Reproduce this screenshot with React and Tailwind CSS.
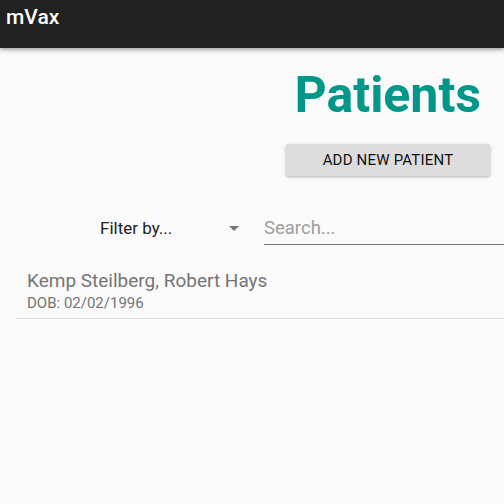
function Header() {
  return (
    <div className="h-12 bg-[#212121] shadow-[0_2px_4px_rgba(0,0,0,0.35)] relative z-10 px-[6px] pt-[5px]">
      <span className="text-white text-[21px] font-medium leading-6">mVax</span>
    </div>
  );
}

function PatientRow({ name, dob }) {
  return (
    <div className="ml-4 border-b border-[#e0e0e0] pl-[11px] pt-[3px] pb-[5px]">
      <div className="text-[19px] leading-6 text-[#757575]">{name}</div>
      <div className="text-[15px] leading-5 text-[#757575]">DOB: {dob}</div>
    </div>
  );
}

export default function App() {
  return (
    <div className="w-[504px] h-[504px] overflow-hidden bg-[#fafafa]" style={{ fontFamily: 'Roboto, sans-serif' }}>
      <Header />
      <div className="flex flex-col items-end pr-[14px] pt-[18px]">
        <h1 className="text-[50px] leading-[58px] font-bold text-[#009688] pr-[9px]">Patients</h1>
        <button className="mt-[20px] w-[204px] h-[32px] bg-[#dcdcdc] rounded-[2px] shadow-[0_1px_3px_rgba(0,0,0,0.3)] text-[15px] text-[#111] tracking-[0.2px]">
          ADD NEW PATIENT
        </button>
      </div>
      <div className="flex items-end mt-[31px] h-[38px]">
        <div className="ml-[100px] w-[144px] flex items-center justify-between pb-[4px]">
          <span className="text-[17px] text-[#212121]">Filter by...</span>
          <svg width="10" height="5" viewBox="0 0 10 5" className="mr-[5px]">
            <path d="M0 0 L10 0 L5 5 Z" fill="#757575" />
          </svg>
        </div>
        <div className="ml-[20px] flex-1 border-b border-[#757575] pb-[2px]">
          <span className="text-[18.5px] text-[#9e9e9e] relative top-[1px]">Search...</span>
        </div>
      </div>
      <div className="mt-[21px]">
        <PatientRow name="Kemp Steilberg, Robert Hays" dob="02/02/1996" />
      </div>
    </div>
  );
}
